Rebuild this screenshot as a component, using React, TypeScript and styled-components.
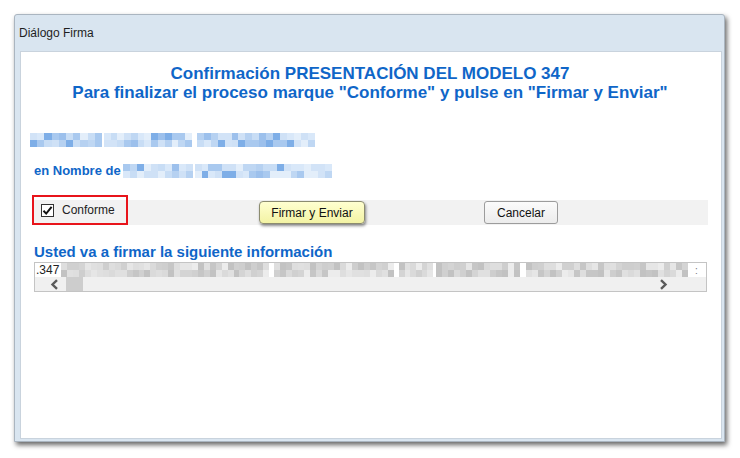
import React from "react";
import styled, { createGlobalStyle } from "styled-components";

const GlobalStyle = createGlobalStyle`
  html, body {
    margin: 0;
    padding: 0;
    background: #ffffff;
  }
  body {
    font-family: "Liberation Sans", Arial, sans-serif;
  }
`;

const Stage = styled.div`
  width: 740px;
  height: 458px;
  padding: 14px 0 0 14px;
  box-sizing: border-box;
`;

const DialogWindow = styled.div`
  width: 711px;
  height: 428px;
  display: flex;
  flex-direction: column;
  box-sizing: border-box;
  background: #d9e5f0;
  border: 1px solid #aab5c0;
  border-radius: 3px 3px 0 0;
  box-shadow: 2px 3px 5px rgba(0, 0, 0, 0.6);
`;

const TitleBar = styled.div`
  height: 36px;
  display: flex;
  align-items: center;
  padding-left: 4px;
  font-size: 12px;
  color: #1e1e1e;
`;

const ClientArea = styled.div`
  flex: 1;
  display: flex;
  padding: 0 2px 2px 5px;
`;

const Panel = styled.div`
  flex: 1;
  display: flex;
  flex-direction: column;
  background: #ffffff;
  border: 1px solid #c9d3dd;
  padding: 12px 13px 0 11px;
`;

const Heading = styled.div`
  font-size: 17px;
  line-height: 19px;
  font-weight: bold;
  color: #0f66c8;
  text-align: center;
`;

const NameRow = styled.div<{ $top: number }>`
  display: flex;
  align-items: center;
  margin-top: ${(p) => p.$top}px;
  height: 15px;
`;

const NameLabel = styled.span`
  font-size: 13px;
  font-weight: bold;
  color: #0f66c8;
  margin: 0 2px 0 2px;
  white-space: nowrap;
`;

const BlurGroup = styled.div<{ $gap: number }>`
  display: grid;
  grid-auto-flow: column;
  grid-template-rows: repeat(2, 7px);
  margin-right: ${(p) => p.$gap}px;
`;

const Pixel = styled.span<{ $w: number }>`
  display: block;
  width: ${(p) => p.$w}px;
  height: 7px;
`;

const ActionBand = styled.div`
  display: flex;
  align-items: flex-end;
  height: 25px;
  margin-top: 22px;
  background: #f2f2f2;
`;

const AcceptBox = styled.label`
  display: flex;
  align-items: center;
  gap: 8px;
  box-sizing: border-box;
  width: 96px;
  height: 30px;
  padding-left: 7px;
  border: 2px solid #e8141b;
  font-size: 12px;
  color: #222;
`;

const Check = styled.span`
  display: flex;
  align-items: center;
  justify-content: center;
  width: 13px;
  height: 13px;
  box-sizing: border-box;
  border: 1px solid #333;
  background: #fff;
`;

const Button = styled.button<{ $primary?: boolean; $left: number; $width: number }>`
  align-self: center;
  margin-left: ${(p) => p.$left}px;
  width: ${(p) => p.$width}px;
  height: 23px;
  padding: 0;
  font-family: "Liberation Sans", Arial, sans-serif;
  font-size: 12px;
  color: #111;
  border-radius: ${(p) => (p.$primary ? 4 : 3)}px;
  border: 1px solid ${(p) => (p.$primary ? "#8c8c70" : "#9c9c9c")};
  background: ${(p) =>
    p.$primary
      ? "linear-gradient(#ffffd0, #f3f3a4)"
      : "linear-gradient(#fbfbfb, #ececec)"};
  box-shadow: ${(p) => (p.$primary ? "1px 2px 3px rgba(0,0,0,0.45)" : "none")};
`;

const SectionTitle = styled.div`
  margin: 18px 0 0 2px;
  font-size: 15px;
  line-height: 17px;
  font-weight: bold;
  color: #0f66c8;
`;

const ScrollBox = styled.div`
  margin: 2px 0 0 2px;
  width: 673px;
  height: 30px;
  box-sizing: border-box;
  border: 1px solid #c4c4c4;
  display: flex;
  flex-direction: column;
`;

const DataLine = styled.div`
  height: 14px;
  display: flex;
  align-items: center;
  font-size: 12px;
  color: #222;
  background: #fff;
  overflow: hidden;
`;

const DataPrefix = styled.span`
  margin: 0 2px 0 1px;
  line-height: 14px;
`;

const Cut = styled.span`
  margin-left: 7px;
  font-size: 10px;
  color: #777;
`;

const ScrollTrack = styled.div`
  height: 14px;
  display: flex;
  align-items: center;
  background: #f0f0f0;
`;

const Arrow = styled.span<{ $left: number }>`
  display: flex;
  margin-left: ${(p) => p.$left}px;
`;

const Thumb = styled.span`
  margin-left: 7px;
  width: 17px;
  height: 14px;
  background: #cdcdcd;
`;

// obfuscated text is drawn as soft pixel blocks
const bluePalette = [
  "#d9e8f9", "#c8ddf5", "#b6d1f1", "#a9c9ef", "#e3eefa",
  "#cfe1f6", "#9cc0ec", "#bfd7f3", "#d2e3f7", "#7eaee7",
];
const greyPalette = [
  "#e6e6e6", "#dadada", "#cecece", "#e0e0e0", "#c6c6c6",
  "#d4d4d4", "#ececec", "#c2c2c2", "#dedede", "#d0d0d0",
];

function makeRand(seed: number) {
  let s = seed;
  return () => {
    s = (s * 9301 + 49297) % 233280;
    return s / 233280;
  };
}

interface BlurProps {
  groups: number[];
  gaps: number[];
  palette: string[];
  seed: number;
  cell?: number;
}

const Blurred: React.FC<BlurProps> = ({ groups, gaps, palette, seed, cell = 7 }) => {
  const rand = makeRand(seed);
  return (
    <>
      {groups.map((width, g) => {
        const cols = Math.max(1, Math.round(width / cell));
        const w = width / cols;
        const cells = [];
        for (let i = 0; i < cols * 2; i++) {
          const c = palette[Math.floor(rand() * palette.length)];
          cells.push(<Pixel key={i} $w={w} style={{ background: c }} />);
        }
        return (
          <BlurGroup key={g} $gap={gaps[g] ?? 0}>
            {cells}
          </BlurGroup>
        );
      })}
    </>
  );
};

const ChevronLeft = () => (
  <svg width="9" height="11" viewBox="0 0 9 11">
    <path d="M7 1.2 L2.5 5.5 L7 9.8" fill="none" stroke="#5a5a5a" strokeWidth="2.4" />
  </svg>
);

const ChevronRight = () => (
  <svg width="9" height="11" viewBox="0 0 9 11">
    <path d="M2 1.2 L6.5 5.5 L2 9.8" fill="none" stroke="#5a5a5a" strokeWidth="2.4" />
  </svg>
);

const CheckMark = () => (
  <svg width="11" height="11" viewBox="0 0 11 11">
    <path d="M1.5 5.8 L4.2 8.6 L9.6 1.8" fill="none" stroke="#111" strokeWidth="2" />
  </svg>
);

export default function App() {
  return (
    <Stage>
      <GlobalStyle />
      <DialogWindow>
        <TitleBar>Diálogo Firma</TitleBar>
        <ClientArea>
          <Panel>
            <Heading>
              Confirmación PRESENTACIÓN DEL MODELO 347
              <br />
              Para finalizar el proceso marque "Conforme" y pulse en "Firmar y Enviar"
            </Heading>

            <NameRow $top={30} style={{ marginLeft: -2 }}>
              <Blurred groups={[72, 88, 118]} gaps={[2, 5, 0]} palette={bluePalette} seed={17} />
            </NameRow>

            <NameRow $top={16}>
              <NameLabel>en Nombre de</NameLabel>
              <Blurred groups={[70, 137]} gaps={[2, 0]} palette={bluePalette} seed={53} />
            </NameRow>

            <ActionBand>
              <AcceptBox>
                <Check>
                  <CheckMark />
                </Check>
                Conforme
              </AcceptBox>
              <Button $primary $left={131} $width={106}>
                Firmar y Enviar
              </Button>
              <Button $left={119} $width={74}>
                Cancelar
              </Button>
            </ActionBand>

            <SectionTitle>Usted va a firmar la siguiente información</SectionTitle>
            <ScrollBox>
              <DataLine>
                <DataPrefix>.347</DataPrefix>
                <Blurred
                  groups={[208, 120, 34, 84, 162]}
                  gaps={[5, 5, 3, 6, 0]}
                  palette={greyPalette}
                  seed={91}
                  cell={6}
                />
                <Cut>:</Cut>
              </DataLine>
              <ScrollTrack>
                <Arrow $left={15}>
                  <ChevronLeft />
                </Arrow>
                <Thumb />
                <Arrow $left={576}>
                  <ChevronRight />
                </Arrow>
              </ScrollTrack>
            </ScrollBox>
          </Panel>
        </ClientArea>
      </DialogWindow>
    </Stage>
  );
}
